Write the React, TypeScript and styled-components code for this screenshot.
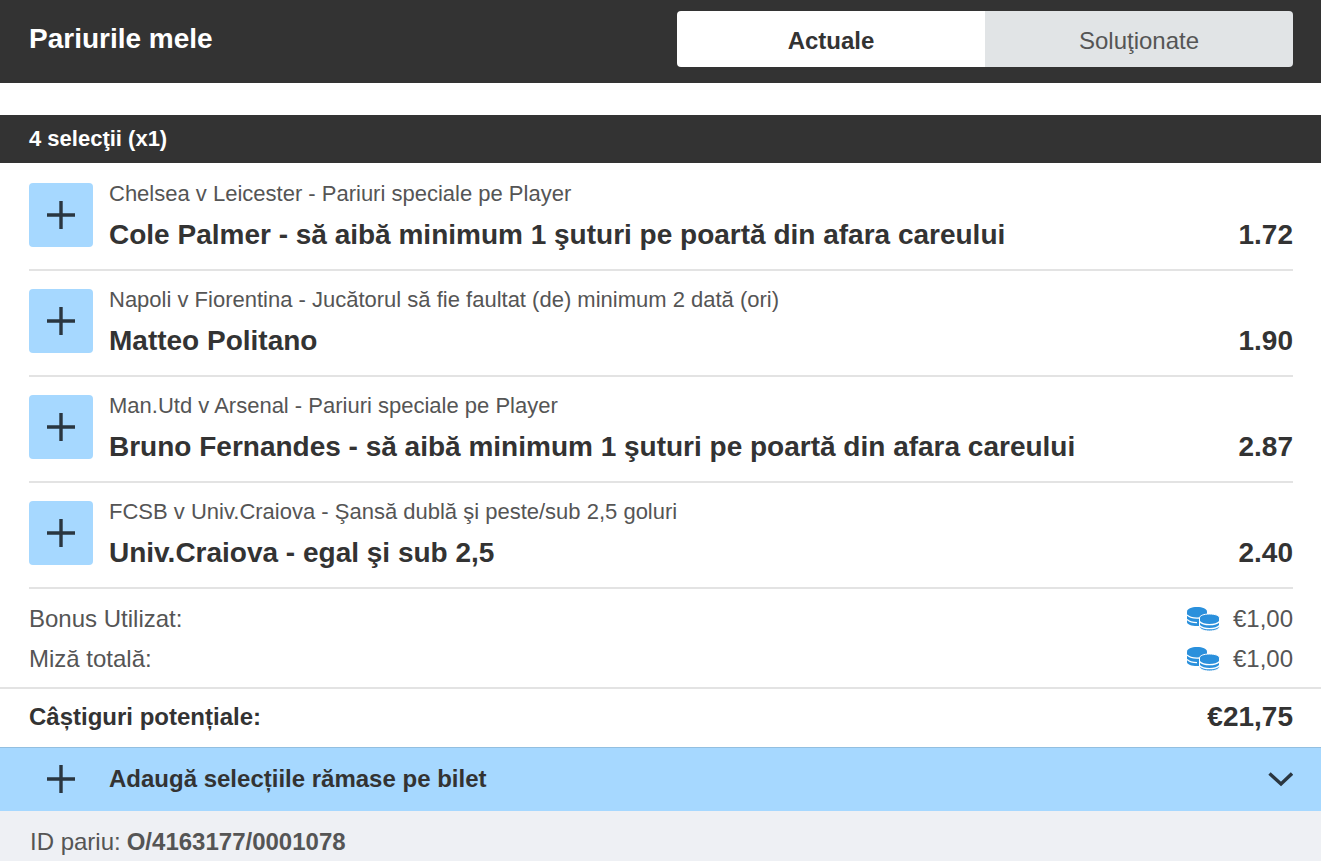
import React from "react";
import styled, { createGlobalStyle } from "styled-components";

const GlobalStyle = createGlobalStyle`
  html, body {
    margin: 0;
    padding: 0;
    background: #fff;
    font-family: "Liberation Sans", Arial, sans-serif;
  }
`;

const Page = styled.div`
  width: 1321px;
  height: 861px;
  overflow: hidden;
  background: #fff;
  color: #333;
`;

const Header = styled.header`
  height: 83px;
  box-sizing: border-box;
  padding: 11px 28px 16px 29px;
  background: #333;
  display: flex;
  justify-content: space-between;
`;

const Title = styled.h1`
  margin: 0;
  padding-top: 12px;
  color: #fff;
  font-size: 28px;
  line-height: 32px;
  font-weight: 700;
`;

const Tabs = styled.div`
  width: 616px;
  height: 56px;
  display: flex;
  border-radius: 4px;
  overflow: hidden;
`;

const Tab = styled.div<{ $active?: boolean }>`
  flex: 1;
  padding-top: 3px;
  display: flex;
  align-items: center;
  justify-content: center;
  font-size: 24px;
  font-weight: ${(p) => (p.$active ? 700 : 400)};
  background: ${(p) => (p.$active ? "#fff" : "#e1e4e6")};
  color: ${(p) => (p.$active ? "#333" : "#555")};
`;

const SectionBar = styled.div`
  margin-top: 32px;
  height: 48px;
  padding-left: 29px;
  background: #333;
  color: #fff;
  display: flex;
  align-items: center;
  font-size: 22px;
  font-weight: 700;
`;

const List = styled.div`
  padding: 2px 28px 0 29px;
`;

const Row = styled.div`
  height: 106px;
  box-sizing: border-box;
  padding-top: 18px;
  border-bottom: 2px solid #e3e3e3;
  display: flex;
  gap: 16px;
`;

const PlusBox = styled.div`
  width: 64px;
  height: 64px;
  flex: none;
  border-radius: 4px;
  background: #a6d8ff;
  display: flex;
  align-items: center;
  justify-content: center;
`;

const RowBody = styled.div`
  flex: 1;
  min-width: 0;
`;

const Market = styled.div`
  font-size: 22px;
  line-height: 22px;
  color: #555;
`;

const PickLine = styled.div`
  margin-top: 12px;
  display: flex;
  justify-content: space-between;
  font-size: 28px;
  line-height: 36px;
  font-weight: 700;
`;

const Summary = styled.div`
  height: 100px;
  box-sizing: border-box;
  padding: 10px 28px 0 29px;
  border-bottom: 2px solid #e3e3e3;
`;

const SummaryRow = styled.div`
  height: 40px;
  display: flex;
  align-items: center;
  justify-content: space-between;
  font-size: 24px;
  color: #555;
`;

const Amount = styled.span`
  display: flex;
  align-items: center;
  gap: 13px;
`;

const PotentialRow = styled.div`
  height: 58px;
  box-sizing: border-box;
  padding: 0 28px 2px 29px;
  display: flex;
  align-items: center;
  justify-content: space-between;
  font-size: 24px;
  font-weight: 700;
`;

const PotentialValue = styled.span`
  font-size: 28px;
`;

const AddBar = styled.div`
  height: 64px;
  box-sizing: border-box;
  padding: 0 28px 1px 29px;
  background: #a6d8ff;
  border-top: 1px solid #93bfe0;
  display: flex;
  align-items: center;
  font-size: 24px;
  font-weight: 700;
`;

const AddIconSlot = styled.div`
  width: 64px;
  margin-right: 16px;
  display: flex;
  justify-content: center;
`;

const AddLabel = styled.div`
  flex: 1;
`;

const IdBar = styled.div`
  height: 50px;
  box-sizing: border-box;
  padding: 12px 0 0 30px;
  background: #eef0f4;
  display: flex;
  align-items: center;
  font-size: 24px;
  color: #555;
`;

const IdValue = styled.strong`
  margin-left: 6px;
  font-weight: 700;
`;

const PlusIcon = () => (
  <svg width="32" height="32" viewBox="0 0 32 32" fill="none" stroke="#2a3640" strokeWidth="3.4">
    <path d="M16 2v28M2 16h28" />
  </svg>
);

const ChevronIcon = () => (
  <svg width="26" height="16" viewBox="0 0 26 16" fill="none" stroke="#2a3640" strokeWidth="3.4">
    <path d="M2.500 2.500L14 13 25 2.500" />
  </svg>
);

const CoinsIcon = () => (
  <svg width="33" height="24" viewBox="0 0 33 24">
    <path
      fill="#2a90dc"
      d="M0 4.500C0 2 4.500 0 10 0s10 2 10 4.500V15c0 2.500-4.500 4-10 4S0 17.500 0 15z"
    />
    <path
      fill="none"
      stroke="#fff"
      strokeWidth="1.2"
      d="M0 8c2 2.200 5.500 3.200 10 3.200S18 10.200 20 8M0 12.500c2 2.200 5.500 3.200 10 3.200"
    />
    <path
      fill="#2a90dc"
      stroke="#fff"
      strokeWidth="1"
      d="M12.500 11c0-2.500 4.500-4 10-4s10 1.500 10 4v8.500c0 2.500-4.500 4.500-10 4.500s-10-2-10-4.500z"
    />
    <path
      fill="none"
      stroke="#fff"
      strokeWidth="1.200"
      d="M12.500 14.500c2 2.200 5.500 3.200 10 3.200s8-1 10-3.200M12.500 18.500c2 2.200 5.500 3.200 10 3.200s8-1 10-3.200"
    />
  </svg>
);

const selections = [
  { market: "Chelsea v Leicester - Pariuri speciale pe Player", pick: "Cole Palmer - să aibă minimum 1 şuturi pe poartă din afara careului", odds: "1.72" },
  { market: "Napoli v Fiorentina - Jucătorul să fie faultat (de) minimum 2 dată (ori)", pick: "Matteo Politano", odds: "1.90" },
  { market: "Man.Utd v Arsenal - Pariuri speciale pe Player", pick: "Bruno Fernandes - să aibă minimum 1 şuturi pe poartă din afara careului", odds: "2.87" },
  { market: "FCSB v Univ.Craiova - Şansă dublă şi peste/sub 2,5 goluri", pick: "Univ.Craiova - egal şi sub 2,5", odds: "2.40" },
];

const App: React.FC = () => (
  <Page>
    <GlobalStyle />
    <Header>
      <Title>Pariurile mele</Title>
      <Tabs>
        <Tab $active>Actuale</Tab>
        <Tab>Soluţionate</Tab>
      </Tabs>
    </Header>
    <SectionBar>4 selecţii (x1)</SectionBar>
    <List>
      {selections.map((s) => (
        <Row key={s.market}>
          <PlusBox>
            <PlusIcon />
          </PlusBox>
          <RowBody>
            <Market>{s.market}</Market>
            <PickLine>
              <span>{s.pick}</span>
              <span>{s.odds}</span>
            </PickLine>
          </RowBody>
        </Row>
      ))}
    </List>
    <Summary>
      <SummaryRow>
        <span>Bonus Utilizat:</span>
        <Amount>
          <CoinsIcon />
          €1,00
        </Amount>
      </SummaryRow>
      <SummaryRow>
        <span>Miză totală:</span>
        <Amount>
          <CoinsIcon />
          €1,00
        </Amount>
      </SummaryRow>
    </Summary>
    <PotentialRow>
      <span>Câștiguri potențiale:</span>
      <PotentialValue>€21,75</PotentialValue>
    </PotentialRow>
    <AddBar>
      <AddIconSlot>
        <PlusIcon />
      </AddIconSlot>
      <AddLabel>Adaugă selecțiile rămase pe bilet</AddLabel>
      <ChevronIcon />
    </AddBar>
    <IdBar>
      ID pariu: <IdValue>O/4163177/0001078</IdValue>
    </IdBar>
  </Page>
);

export default App;
